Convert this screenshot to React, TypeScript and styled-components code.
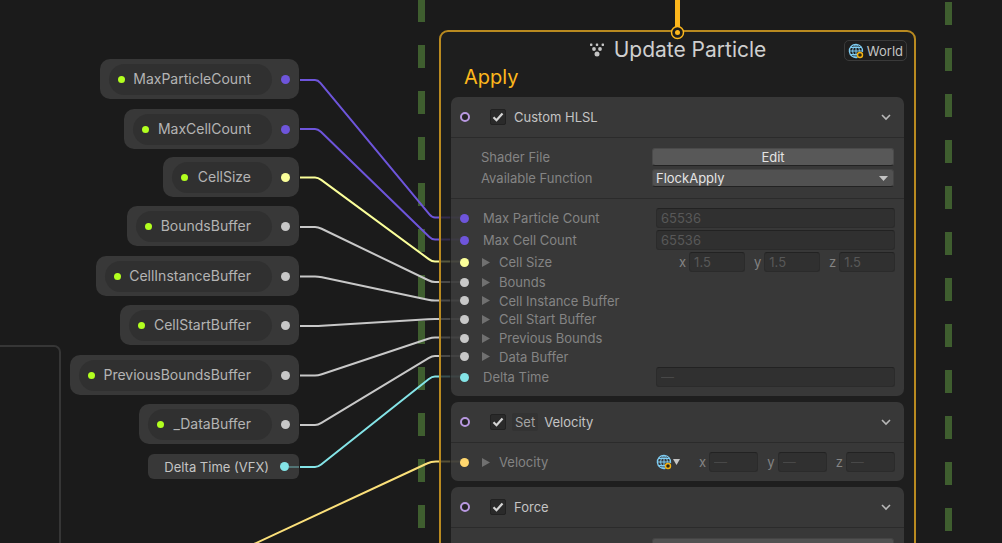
import React from 'react';
import styled, { createGlobalStyle, css } from 'styled-components';

const color = {
  canvas: '#1b1b1b',
  context: '#1e1e1e',
  block: '#383838',
  well: '#303030',
  line: '#2b2b2b',
  text: '#c4c4c4',
  muted: '#848484',
  accent: '#fdb71c',
  uint: '#6e55db',
  float: '#fbff9a',
  buffer: '#c8c8c8',
  time: '#84e4e7',
  vector: '#ffd76e',
};

const GlobalStyle = createGlobalStyle`
  * { box-sizing: border-box; }
  body {
    margin: 0;
    background: ${color.canvas};
    color: ${color.text};
    font-family: Inter, "Liberation Sans", sans-serif;
    font-size: 13px;
    line-height: 18px;
  }
`;

const Canvas = styled.main`
  position: relative;
  height: 100vh;
  overflow: hidden;
`;

const Layer = styled.svg`
  position: absolute;
  inset: 0;
  width: 100%;
  height: 100%;
  pointer-events: none;
`;

const GroupFrame = styled.div`
  position: absolute;
  left: -20px;
  top: 345px;
  bottom: -20px;
  width: 81px;
  border: 2px solid #363636;
  border-radius: 7px;
`;

/* ---------- parameter nodes ---------- */

const nodePlace = css<{ $x: number; $y: number; $w: number }>`
  position: absolute;
  left: ${(p) => p.$x}px;
  top: ${(p) => p.$y}px;
  width: ${(p) => p.$w}px;
`;

const ParameterNode = styled.div<{ $x: number; $y: number; $w: number }>`
  ${nodePlace}
  display: flex;
  align-items: center;
  gap: 9px;
  height: 40px;
  padding: 0 9px;
  border-radius: 10px;
  background: ${color.block};
`;

const Pill = styled.div`
  flex: 1;
  display: flex;
  align-items: center;
  height: 31px;
  padding: 0 21px 0 9px;
  border-radius: 16px;
  background: ${color.well};
  font-size: 14px;
  white-space: nowrap;
`;

const PillName = styled.span`
  flex: 1;
  text-align: right;
  color: #b4b4b4;
`;

const ExposedDot = styled.span`
  width: 7px;
  height: 7px;
  border-radius: 50%;
  background: #b2ff1f;
`;

const Port = styled.span<{ $color: string }>`
  flex: none;
  width: 9px;
  height: 9px;
  border-radius: 50%;
  background: ${(p) => p.$color};
`;

const OperatorNode = styled.div<{ $x: number; $y: number; $w: number }>`
  ${nodePlace}
  display: flex;
  align-items: center;
  justify-content: flex-end;
  gap: 11px;
  height: 25px;
  padding-right: 10px;
  border-radius: 6px;
  background: ${color.block};
  white-space: nowrap;
`;

/* ---------- context ---------- */

const Context = styled.section`
  position: absolute;
  left: 439px;
  top: 30px;
  width: 477px;
  min-height: 600px;
  padding: 3px 10px;
  border: 2px solid #b98a20;
  border-radius: 9px;
  background: ${color.context};
`;

const ContextHeader = styled.header`
  display: flex;
  height: 29px;
`;

const Side = styled.div`
  flex: 1;
  display: flex;
  align-items: flex-start;
  justify-content: flex-end;
  padding-top: 5px;
`;

const Title = styled.h1`
  display: flex;
  align-items: center;
  gap: 9px;
  margin: 0;
  font-size: 21px;
  font-weight: 400;
  line-height: 28px;
  color: #cfcfcf;
`;

const SpaceButton = styled.button`
  display: flex;
  align-items: center;
  gap: 3px;
  height: 21px;
  margin-right: -3px;
  padding: 0 3px;
  border: 1px solid #3a3a3a;
  border-radius: 5px;
  background: transparent;
  color: ${color.text};
  font: inherit;
`;

const Stage = styled.h2`
  margin: 0 0 7px;
  padding-left: 13px;
  font-size: 20px;
  font-weight: 400;
  line-height: 26px;
  color: ${color.accent};
`;

const Blocks = styled.div`
  display: flex;
  flex-direction: column;
  gap: 6px;
`;

const Block = styled.article`
  border-radius: 7px;
  background: ${color.block};
`;

const BlockHeader = styled.header`
  display: flex;
  align-items: center;
  height: 41px;
  padding: 0 13px 0 9px;
  border-bottom: 1px solid ${color.line};
`;

const Activation = styled.span`
  width: 10px;
  height: 10px;
  margin-right: 20px;
  border: 2px solid #b898e0;
  border-radius: 50%;
  background: #242424;
`;

const Toggle = styled.label`
  flex: 1;
  display: flex;
  align-items: center;
  gap: 8px;
`;

const CheckWrap = styled.span`
  position: relative;
  display: flex;
`;

const CheckBox = styled.input`
  appearance: none;
  width: 16px;
  height: 16px;
  margin: 0;
  border: 1px solid #212121;
  border-radius: 2px;
  background: #2a2a2a;
`;

const CheckMark = styled.svg`
  position: absolute;
  inset: 0;
  pointer-events: none;
`;

const Operation = styled.span`
  margin: 0 -2px;
  padding: 0 3px;
  border-radius: 2px;
  background: #333333;
  color: #a4a4a4;
`;

const FoldButton = styled.button`
  display: flex;
  padding: 0;
  border: 0;
  background: none;
`;

const Settings = styled.div`
  display: flex;
  flex-direction: column;
  gap: 3px;
  padding: 10px 10px 11px 30px;
  border-bottom: 1px solid ${color.line};
`;

const SettingRow = styled.div`
  display: flex;
  align-items: center;
  color: ${color.muted};
`;

const Grow = styled.span`
  flex: 1;
`;

const EditButton = styled.button`
  width: 242px;
  height: 18px;
  padding: 0;
  border: 1px solid #4a4a4a;
  border-bottom-color: #222222;
  border-radius: 3px;
  background: #585858;
  color: #e4e4e4;
  font: inherit;
  line-height: 16px;
`;

const SelectWrap = styled.span`
  position: relative;
  display: flex;
  width: 242px;
`;

const Select = styled.select`
  appearance: none;
  width: 100%;
  height: 18px;
  padding: 0 3px;
  border: 1px solid #444444;
  border-bottom-color: #222222;
  border-radius: 3px;
  background: #515151;
  color: #e4e4e4;
  font: inherit;
  line-height: 16px;
`;

const SelectCaret = styled.svg`
  position: absolute;
  right: 6px;
  top: 7px;
  pointer-events: none;
`;

const Inputs = styled.div`
  padding: 8px 9px;
`;

const InputRow = styled.div`
  display: flex;
  align-items: center;
  height: 22px;
  color: ${color.muted};
`;

const FoldGroup = styled.div`
  display: grid;
  grid-auto-rows: 1fr;
  height: 93px;

  ${InputRow} {
    height: auto;
  }
`;

const RowLabel = styled.span`
  flex: 1;
  padding-left: 14px;
`;

const FoldLabel = styled.span`
  flex: 1;
  display: flex;
  align-items: center;
  gap: 9px;
  padding-left: 13px;
`;

const Field = styled.input<{ $wide?: boolean }>`
  ${(p) => (p.$wide ? 'width: 239px;' : 'flex: 1; width: 0;')}
  min-width: 0;
  height: 20px;
  padding: 0 4px;
  border: 1px solid #2b2b2b;
  border-top-color: #222222;
  border-radius: 3px;
  background: ${color.well};
  color: #585858;
  font: inherit;

  &::placeholder {
    color: #484848;
    opacity: 1;
  }
`;

const Axes = styled.div<{ $width: number }>`
  display: flex;
  gap: 9px;
  width: ${(p) => p.$width}px;
`;

const Axis = styled.label`
  flex: 1;
  display: flex;
  align-items: center;
  gap: 3px;
`;

const SpacePicker = styled.button`
  display: flex;
  align-items: center;
  gap: 1px;
  margin-right: 19px;
  padding: 0;
  border: 0;
  background: none;
`;

/* ---------- icons ---------- */

const Globe = () => (
  <svg width="16" height="16" viewBox="0 0 16 16" fill="none" stroke="#7fcdf3" strokeWidth="1">
    <path d="M9.500 14.300A6.600 6.600 0 1 1 14.500 8.800" strokeWidth="1.300" />
    <path d="M8 1v14M1 8h13.500M2.300 4.500h11.400M2.300 11.500h7" />
    <path d="M8 1.200C3.600 4.800 3.600 11.200 8 14.800M8 1.200c2.600 2 3.600 4.800 3.300 7.300" />
    <circle cx="12" cy="12" r="2.500" stroke="#f5b313" strokeWidth="1.400" fill="#2a2616" />
  </svg>
);

const ParticleIcon = () => (
  <svg width="16" height="16" viewBox="0 0 16 16" fill="#c4c4c4">
    <rect x="1" y="1.500" width="2.400" height="2.400" rx="0.600" />
    <rect x="6.800" y="1.500" width="2.400" height="2.400" rx="0.600" />
    <rect x="12.600" y="1.500" width="2.400" height="2.400" rx="0.600" />
    <circle cx="5" cy="7" r="1.900" />
    <circle cx="11" cy="7" r="1.900" />
    <circle cx="8" cy="12" r="2.500" />
  </svg>
);

const Chevron = () => (
  <svg width="10" height="8" viewBox="0 0 10 8" fill="none" stroke="#b8b8b8" strokeWidth="1.6">
    <path d="M1 2l4 4 4-4" />
  </svg>
);

const FoldArrow = () => (
  <svg width="8" height="9" viewBox="0 0 8 9" fill="#707070">
    <path d="M0 0l8 4.5L0 9z" />
  </svg>
);

const Caret = () => (
  <svg width="7" height="6" viewBox="0 0 7 6" fill="#c4c4c4">
    <path d="M0 0h7L3.5 6z" />
  </svg>
);

/* ---------- parts ---------- */

const BlockHead = ({ name, operation }: { name: string; operation?: string }) => (
  <BlockHeader>
    <Activation />
    <Toggle>
      <CheckWrap>
        <CheckBox type="checkbox" defaultChecked />
        <CheckMark width="16" height="16" viewBox="0 0 16 16" fill="none" stroke="#d4d4d4" strokeWidth="2.2">
          <path d="M3.5 8.2l3 3 6-6.8" />
        </CheckMark>
      </CheckWrap>
      {operation && <Operation>{operation}</Operation>}
      <span>{name}</span>
    </Toggle>
    <FoldButton aria-label={`Fold ${name}`}>
      <Chevron />
    </FoldButton>
  </BlockHeader>
);

const Dropdown = ({ label, options }: { label: string; options: string[] }) => (
  <SelectWrap>
    <Select aria-label={label}>
      {options.map((option) => (
        <option key={option}>{option}</option>
      ))}
    </Select>
    <SelectCaret width="9" height="5" viewBox="0 0 9 5" fill="#c4c4c4">
      <path d="M0 0h9L4.5 5z" />
    </SelectCaret>
  </SelectWrap>
);

const ValueRow = ({ label, value, tint }: { label: string; value?: string; tint: string }) => (
  <InputRow as="label">
    <Port $color={tint} />
    <RowLabel>{label}</RowLabel>
    <Field $wide disabled defaultValue={value} placeholder="—" />
  </InputRow>
);

const VectorFields = ({ value, width }: { value?: string; width: number }) => (
  <Axes $width={width}>
    {['x', 'y', 'z'].map((axis) => (
      <Axis key={axis}>
        {axis}
        <Field disabled defaultValue={value} placeholder="—" />
      </Axis>
    ))}
  </Axes>
);

const FoldRow = ({ label, tint, children }: { label: string; tint: string; children?: React.ReactNode }) => (
  <InputRow>
    <Port $color={tint} />
    <FoldLabel>
      <FoldArrow />
      {label}
    </FoldLabel>
    {children}
  </InputRow>
);

/* ---------- graph data ---------- */

const parameters = [
  { name: 'MaxParticleCount', x: 100, y: 59, tint: color.uint },
  { name: 'MaxCellCount', x: 124, y: 109, tint: color.uint },
  { name: 'CellSize', x: 163, y: 157, tint: color.float },
  { name: 'BoundsBuffer', x: 127, y: 206, tint: color.buffer },
  { name: 'CellInstanceBuffer', x: 96, y: 256, tint: color.buffer },
  { name: 'CellStartBuffer', x: 120, y: 305, tint: color.buffer },
  { name: 'PreviousBoundsBuffer', x: 70, y: 355, tint: color.buffer },
  { name: '_DataBuffer', x: 139, y: 404, tint: color.buffer },
];

const NODE_RIGHT = 299;

const wires = [
  { from: 80, to: 217.5, tint: color.uint },
  { from: 129, to: 239.5, tint: color.uint },
  { from: 177.5, to: 261.5, tint: color.float },
  { from: 227, to: 282, tint: color.buffer },
  { from: 276.5, to: 300.5, tint: color.buffer },
  { from: 326, to: 319, tint: color.buffer },
  { from: 375.5, to: 337.5, tint: color.buffer },
  { from: 425, to: 356, tint: color.buffer },
  { from: 467, to: 376.5, tint: color.time },
];

const wirePath = (from: number, to: number) => {
  const x1 = 318;
  const x2 = 432;
  const length = Math.hypot(x2 - x1, to - from);
  const dx = ((x2 - x1) / length) * 4;
  const dy = ((to - from) / length) * 4;
  return `M300 ${from}H${x1 - 3}Q${x1} ${from} ${x1 + dx} ${from + dy}L${x2 - dx} ${to - dy}Q${x2} ${to} ${x2 + 3} ${to}H439`;
};

export default function App() {
  return (
    <>
      <GlobalStyle />
      <Canvas>
        <GroupFrame />
        <Layer>
          <g stroke="#3f5e2f" strokeWidth="7" strokeDasharray="23 23">
            <path d="M421.500 -1V700" />
            <path d="M948.500 2V700" />
          </g>
        </Layer>

        {parameters.map((p) => (
          <ParameterNode key={p.name} $x={p.x} $y={p.y} $w={NODE_RIGHT - p.x}>
            <Pill>
              <ExposedDot />
              <PillName>{p.name}</PillName>
            </Pill>
            <Port $color={p.tint} />
          </ParameterNode>
        ))}
        <OperatorNode $x={148} $y={454} $w={NODE_RIGHT - 148}>
          Delta Time (VFX)
          <Port $color={color.time} />
        </OperatorNode>

        <Context>
          <ContextHeader>
            <Side />
            <Title>
              <ParticleIcon />
              Update Particle
            </Title>
            <Side>
              <SpaceButton>
                <Globe />
                World
              </SpaceButton>
            </Side>
          </ContextHeader>
          <Stage>Apply</Stage>
          <Blocks>
            <Block>
              <BlockHead name="Custom HLSL" />
              <Settings>
                <SettingRow>
                  <Grow>Shader File</Grow>
                  <EditButton>Edit</EditButton>
                </SettingRow>
                <SettingRow>
                  <Grow>Available Function</Grow>
                  <Dropdown label="Available Function" options={['FlockApply']} />
                </SettingRow>
              </Settings>
              <Inputs>
                <ValueRow label="Max Particle Count" value="65536" tint={color.uint} />
                <ValueRow label="Max Cell Count" value="65536" tint={color.uint} />
                <FoldRow label="Cell Size" tint={color.float}>
                  <VectorFields value="1.5" width={216} />
                </FoldRow>
                <FoldGroup>
                  <FoldRow label="Bounds" tint={color.buffer} />
                  <FoldRow label="Cell Instance Buffer" tint={color.buffer} />
                  <FoldRow label="Cell Start Buffer" tint={color.buffer} />
                  <FoldRow label="Previous Bounds" tint={color.buffer} />
                  <FoldRow label="Data Buffer" tint={color.buffer} />
                </FoldGroup>
                <ValueRow label="Delta Time" tint={color.time} />
              </Inputs>
            </Block>
            <Block>
              <BlockHead name="Velocity" operation="Set" />
              <Inputs>
                <FoldRow label="Velocity" tint={color.vector}>
                  <SpacePicker aria-label="Space">
                    <Globe />
                    <Caret />
                  </SpacePicker>
                  <VectorFields width={196} />
                </FoldRow>
              </Inputs>
            </Block>
            <Block>
              <BlockHead name="Force" />
              <Settings>
                <SettingRow>
                  <Grow />
                  <Dropdown label="Force mode" options={[]} />
                </SettingRow>
              </Settings>
            </Block>
          </Blocks>
        </Context>

        <Layer fill="none">
          {wires.map((w) => (
            <g key={w.to} stroke={w.tint} strokeWidth="2">
              <path d={wirePath(w.from, w.to)} />
              <path d={`M441 ${w.to}H450`} strokeOpacity="0.25" />
              <path d={`M450 ${w.to}H460`} strokeOpacity="0.07" />
            </g>
          ))}
          <path d="M289 467H299" stroke={color.time} strokeWidth="2" strokeOpacity="0.35" />
          <g stroke="#fbe07a" strokeWidth="2">
            <path d="M211 564L427 463.500Q431 461.500 436 461.500H439" />
            <path d="M441 461.500H450" strokeOpacity="0.25" />
            <path d="M450 461.500H460" strokeOpacity="0.07" />
          </g>
          <path d="M677.500 0V27" stroke={color.accent} strokeWidth="5" />
          <circle cx="677.5" cy="32.500" r="6" stroke={color.accent} strokeWidth="1.5" fill={color.canvas} />
          <circle cx="677.5" cy="32.500" r="2.500" fill={color.accent} />
        </Layer>
      </Canvas>
    </>
  );
}
